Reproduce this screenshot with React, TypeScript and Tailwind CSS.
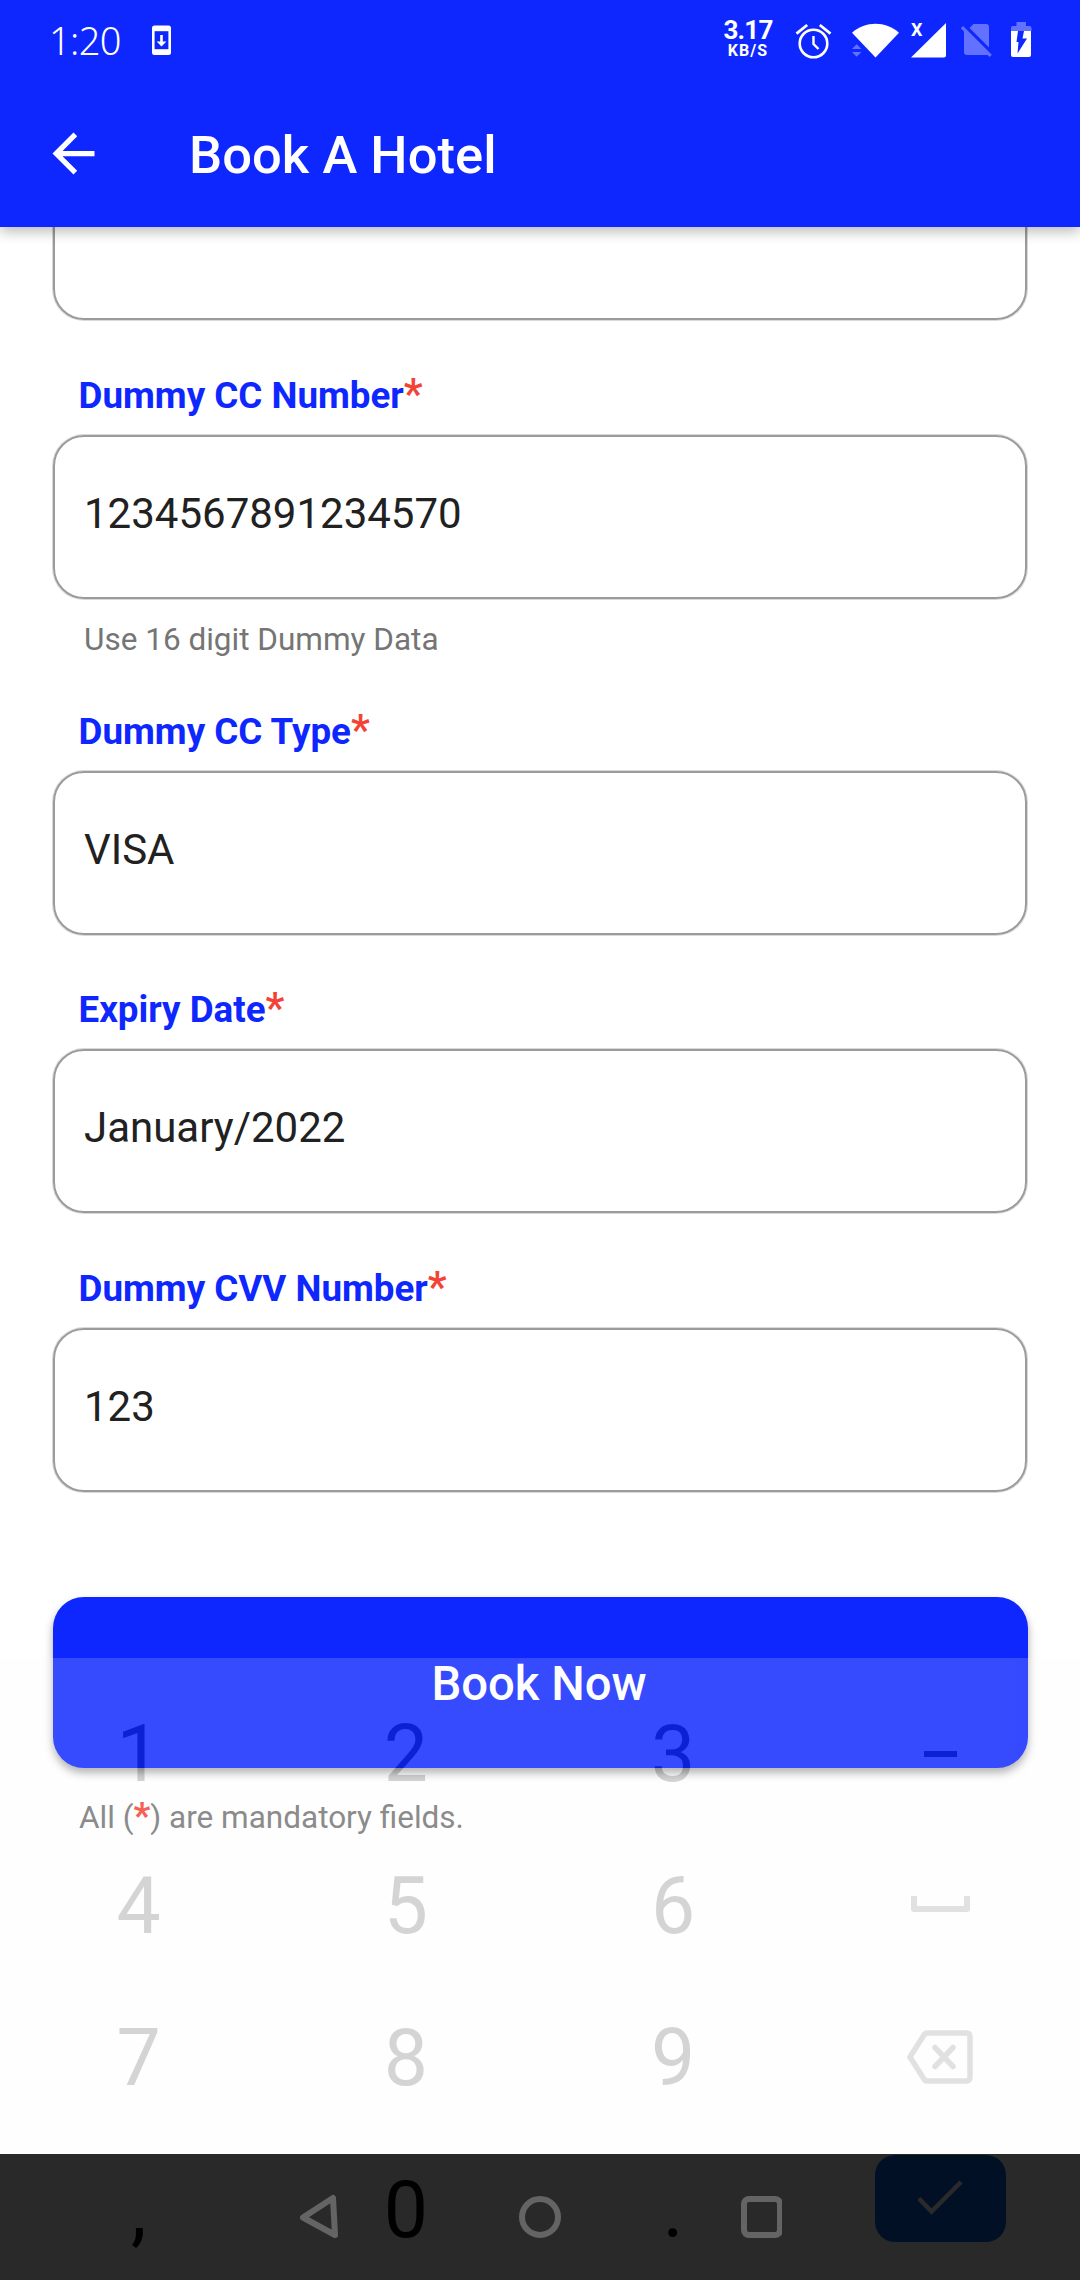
import type { ReactNode } from "react";
import { MdArrowBack } from "react-icons/md";

function Field({ label, value, helper }: { label: string; value: string; helper?: string }) {
  return (
    <div className={helper ? "h-[336px]" : "h-[278.4px]"}>
      <div className="flex h-[52px] items-end pl-[78.5px] leading-[49px] whitespace-nowrap text-[36.75px] font-bold text-[#0f27ff]">
        <div className="mb-[15px] h-[49px]">
          {label}
          <span className="text-[42px] leading-[40px] font-semibold text-[#f44336]">*</span>
        </div>
      </div>
      <div className="mx-[53px] flex h-[164px] items-center rounded-[31px] border-2 border-[#9b9b9b] pl-[29px] text-[42px] leading-[50px] text-[#212121] shadow-[0_0_0_1px_#9b9b9b60]">
        <span className="-mt-[6px]">{value}</span>
      </div>
      {helper && (
        <div className="pt-[22px] pl-[84px] text-[31.5px] leading-[37px] text-[#757575]">{helper}</div>
      )}
    </div>
  );
}

function StatusIcons() {
  return (
    <svg className="absolute left-0 top-0" width="1080" height="80" viewBox="0 0 1080 80" fill="none">
      {/* phone with download arrow */}
      <rect x="152" y="25.5" width="19" height="29.5" rx="2.5" fill="#fff" />
      <rect x="154.6" y="31.2" width="13.8" height="18" fill="#0f27ff" />
      <path d="M160.2 35h2.600v6.500h3.600L161.500 46.500 156.600 41.500h3.600z" fill="#fff" />
      {/* alarm clock */}
      <circle cx="813.5" cy="43.5" r="13.8" stroke="#fff" strokeWidth="2.6" />
      <path d="M813.5 36v8l5 5" stroke="#fff" strokeWidth="2.4" />
      <path d="M796.5 33.600 807.200 25M830.500 33.600 819.800 25" stroke="#fff" strokeWidth="2.8" />
      {/* wifi */}
      <path d="M852 32.700C859 26.500 867 23.700 875.500 23.700s16.500 2.800 23.500 9L875.500 57.500z" fill="#fff" />
      <path d="M852 49l4.700-4.700 4.700 4.700zM852 52h9.400l-4.700 4.700z" fill="#fff" fillOpacity=".35" />
      {/* signal */}
      <path d="M946 23v32.500q0 2-2 2H911z" fill="#fff" />
      {/* missing sim */}
      <path
        d="M969.500 28l4-4H986q3 0 3 3V47.500zM960.800 28.200l2.200-2.200 28.800 28.800-2.200 2.200-2.100-2H967q-3 0-3-3V31.500z"
        fill="#fff"
        fillOpacity=".35"
      />
      {/* battery */}
      <path d="M1011 31v-3q0-2 2-2h3.500v-4h9.500v4h3.500q2 0 2 2v3z" fill="#fff" fillOpacity=".35" />
      <path d="M1011 31h20v24q0 2-2 2h-16q-2 0-2-2z" fill="#fff" />
      <path d="M1018 31h6l-1.500 7.500h4.500l-9.500 15 1-11.500h-2z" fill="#0f27ff" />
    </svg>
  );
}

function StatusBar() {
  return (
    <div className="relative h-[80px] text-white">
      <StatusIcons />
      <span className="absolute left-[49px] top-[13px] font-['Noto_Sans','Open_Sans',sans-serif] text-[38px] leading-[54px] font-[350] tracking-[-0.6px]">
        1:20
      </span>
      <div className="absolute left-[718px] top-[17px] flex w-[60px] flex-col items-center font-bold">
        <span className="text-[26px] leading-[26px] tracking-[-0.8px]">3.17</span>
        <span className="text-[16px] leading-[16px] tracking-[1.1px]">KB/S</span>
      </div>
      <span className="absolute left-[911px] top-[19px] text-[18px] leading-[21px] font-bold">X</span>
    </div>
  );
}

function Key({ children }: { children: ReactNode }) {
  return <div className="flex h-[152px] items-center justify-center">{children}</div>;
}

function Keyboard() {
  return (
    <div className="absolute left-0 top-[1658px] h-[622px] w-full overflow-hidden bg-[#fafafa] opacity-[.165]">
      <div className="mt-[20px] grid grid-cols-4 pl-[5px] pr-[6px] text-[78.75px] leading-[92px] text-black">
        <Key>1</Key>
        <Key>2</Key>
        <Key>3</Key>
        <Key>
          <div className="h-[6px] w-[33px] bg-black" />
        </Key>
        <Key>4</Key>
        <Key>5</Key>
        <Key>6</Key>
        <Key>
          <svg className="-mt-[5px]" width="59" height="16" viewBox="0 0 59 16" fill="none">
            <path d="M3 0v13h53V0" stroke="#505050" strokeWidth="6" strokeLinejoin="round" />
          </svg>
        </Key>
        <Key>7</Key>
        <Key>8</Key>
        <Key>9</Key>
        <Key>
          <svg className="-mt-[2px]" width="66" height="54" viewBox="0 0 66 54" fill="none" stroke="#505050">
            <path d="M20 3h39q4 0 4 4v40q0 4-4 4H20q-2 0-3-2L3 27 17 5q1-2 3-2z" strokeWidth="5.5" />
            <path d="M28 17.500l18 19M46 17.500l-18 19" strokeWidth="5.5" strokeLinecap="round" />
          </svg>
        </Key>
        <Key>,</Key>
        <Key>0</Key>
        <Key>.</Key>
        <Key>
          <div className="-mt-[24px] flex h-[87px] w-[131px] items-center justify-center rounded-[20px] bg-[#1164e4]">
            <svg width="46" height="36" viewBox="0 0 46 36" fill="none">
              <path d="M2 18.500l12.500 13L44 2" stroke="#fff" strokeWidth="4.5" />
            </svg>
          </div>
        </Key>
      </div>
    </div>
  );
}

function NavBar() {
  return (
    <div className="flex h-[126px] items-center justify-center bg-black">
      <svg width="484" height="46" viewBox="0 0 484 46" fill="none" stroke="#464646" strokeWidth="6" strokeLinejoin="round">
        <path d="M5 23.500L35 4l2 37z" />
        <circle cx="242" cy="23" r="18" />
        <rect x="446" y="5" width="36" height="36" rx="5" />
      </svg>
    </div>
  );
}

export default function App() {
  return (
    <div className="relative h-[2280px] w-[1080px] overflow-hidden bg-white font-['Roboto',sans-serif]">
      <header className="relative z-10 h-[227px] bg-[#0f27ff] shadow-[0_5px_12px_rgba(0,0,0,0.26)]">
        <StatusBar />
        <div className="flex h-[147px] items-center pl-[42px] text-white">
          <MdArrowBack size={63} />
          <h1 className="mt-[2px] ml-[84px] text-[52.5px] leading-[62px] font-medium tracking-[0.05px]">Book A Hotel</h1>
        </div>
      </header>
      <main className="h-[1927px] overflow-hidden bg-white">
        <div className="mx-[53px] -mt-[71px] h-[164px] rounded-[31px] border-2 border-[#9b9b9b] shadow-[0_0_0_1px_#9b9b9b60]" />
        <div className="mt-[63px]">
          <Field label="Dummy CC Number" value="1234567891234570" helper="Use 16 digit Dummy Data" />
          <Field label="Dummy CC Type" value="VISA" />
          <Field label="Expiry Date" value="January/2022" />
          <Field label="Dummy CVV Number" value="123" />
        </div>
        <button className="mx-[52.500px] mt-[42.800px] flex h-[171px] w-[975px] items-center justify-center rounded-[31px] bg-[#0f27ff] pt-[3px] pr-[2px] text-[47.25px] font-medium text-white shadow-[0_5px_8px_rgba(0,0,0,0.35)]">
          Book Now
        </button>
        <div className="mt-[23px] pl-[79px] text-[31.5px] leading-[49px] text-[#757575]">
          All (<span className="text-[37px] font-bold text-[#f44336]">*</span>) are mandatory fields.
        </div>
      </main>
      <NavBar />
      <Keyboard />
    </div>
  );
}
